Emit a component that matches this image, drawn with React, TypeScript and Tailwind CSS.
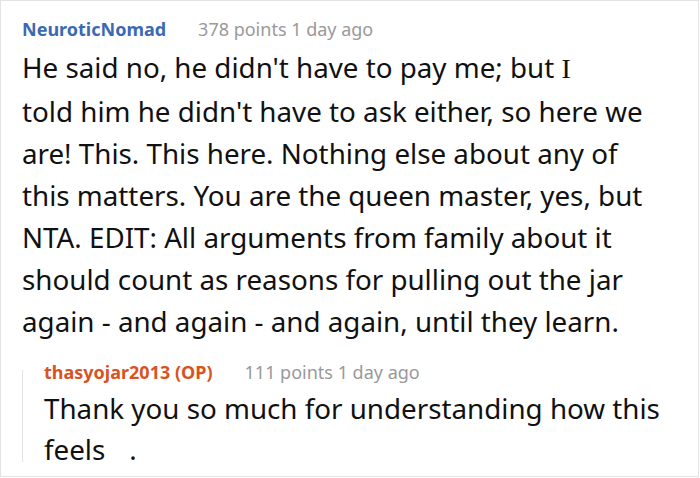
import React from "react";

export default function App() {
  return (
    <div className="w-[700px] h-[478px] bg-white" style={{ fontFamily: '"Noto Sans", "Open Sans", sans-serif' }}>
      <div className="w-[699px] h-[477px] border border-[#e3e3e3] pl-[21px] pt-[15px]">
        <div className="flex items-baseline text-[18px] leading-[27px]">
          <span className="font-bold text-[#3a69b6]">NeuroticNomad</span>
          <span className="ml-[32px] text-[#999999]">378 points 1 day ago</span>
        </div>
        <p className="mt-[3px] text-[27.75px] leading-[42px] text-[#111111]">
          He said no, he didn't have to pay me; but <span style={{ fontFamily: '"Liberation Serif", serif' }}>I</span>
          <br />
          told him he didn't have to ask either, so here we
          <br />
          are! This. This here. Nothing else about any of
          <br />
          this matters. You are the queen master, yes, but
          <br />
          NTA. EDIT: All arguments from family about it
          <br />
          should count as reasons for pulling out the jar
          <br />
          again - and again - and again, until they learn.
        </p>
        <div className="mt-[17px] flex">
          <div className="w-px bg-[#e3e3e3] mt-[11px] mb-[8px]" />
          <div className="pl-[21px]">
            <div className="flex items-baseline text-[18px] leading-[27px]">
              <span className="font-bold text-[#d9531f]">thasyojar2013 (OP)</span>
              <span className="ml-[32px] text-[#999999]">111 points 1 day ago</span>
            </div>
            <p className="mt-[2px] text-[27.75px] leading-[41px] text-[#111111]">
              Thank you so much for understanding how this
              <br />
              feels<span className="inline-block w-[24px]" />.
            </p>
          </div>
        </div>
      </div>
    </div>
  );
}
